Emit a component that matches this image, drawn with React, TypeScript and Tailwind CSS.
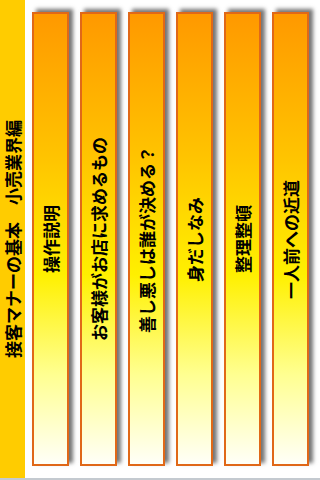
const items = [
  "操作説明",
  "お客様がお店に求めるもの",
  "善し悪しは誰が決める？",
  "身だしなみ",
  "整理整頓",
  "一人前への近道",
];

function VText({ children }: { children: string }) {
  return (
    <span className="rotate-180 whitespace-nowrap text-[17px] leading-[18px] font-bold text-black [writing-mode:vertical-rl] [text-orientation:sideways]">
      {children}
    </span>
  );
}

export default function App() {
  return (
    <div
      className="w-[320px] h-[480px] bg-white overflow-hidden flex flex-col"
      style={{ fontFamily: '"Noto Sans CJK JP", "Noto Sans", sans-serif' }}
    >
      <div className="flex h-[478px]">
        <div className="w-[25px] h-full bg-[#FFCC00] flex items-center justify-center">
          <VText>接客マナーの基本　小売業界編</VText>
        </div>
        <div className="flex gap-[11px] pl-[7px] pt-[12px]">
          {items.map((t) => (
            <button
              key={t}
              className="w-[37px] h-[454px] border-2 border-[#E06818] bg-[linear-gradient(to_bottom,#FF9900_0%,#FFC400_32%,#FFF000_58%,#FFFF90_80%,#FFFFF8_100%)] shadow-[4px_-3px_4px_rgba(0,0,0,0.55)] flex items-center justify-center"
            >
              <VText>{t}</VText>
            </button>
          ))}
        </div>
      </div>
      <div className="h-[2px] bg-[#C4CAD0]" />
    </div>
  );
}
